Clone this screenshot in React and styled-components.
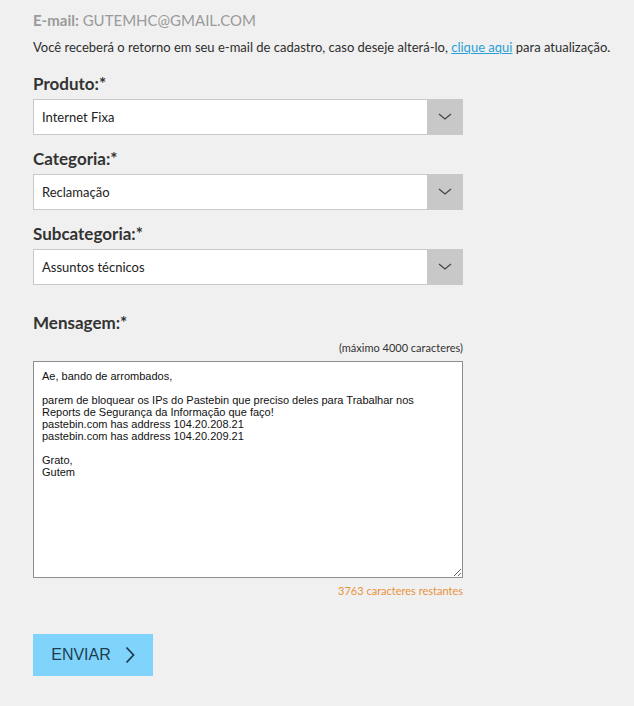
import React from 'react'
import styled, { createGlobalStyle } from 'styled-components'

const Global = createGlobalStyle`
    html, body {
        margin: 0;
        padding: 0;
        background-color: #f0f0f0;
    }
    * { box-sizing: border-box; }
`;

const message = `Ae, bando de arrombados,

parem de bloquear os IPs do Pastebin que preciso deles para Trabalhar nos
Reports de Segurança da Informação que faço!
pastebin.com has address 104.20.208.21
pastebin.com has address 104.20.209.21

Grato,
Gutem`;

function Select({ value }) {
    return (
        <SelectBox>
            <SelectValue>{value}</SelectValue>
            <Arrow>
                <svg width="14" height="8" viewBox="0 0 14 8">
                    <path d="M1 1 L7 6 L13 1" fill="none" stroke="#444" strokeWidth="1.2" />
                </svg>
            </Arrow>
        </SelectBox>
    )
}

export default function App() {
    return (
        <Page>
            <Global />
            <Email><strong>E-mail:</strong> GUTEMHC@GMAIL.COM</Email>
            <Notice>
                Você receberá o retorno em seu e-mail de cadastro, caso deseje alterá-lo, <a href="#">clique aqui</a> para atualização.
            </Notice>

            <Label $top="17px">Produto:*</Label>
            <Select value="Internet Fixa" />

            <Label>Categoria:*</Label>
            <Select value="Reclamação" />

            <Label>Subcategoria:*</Label>
            <Select value="Assuntos técnicos" />

            <Label $top="28px">Mensagem:*</Label>
            <Hint>(máximo 4000 caracteres)</Hint>
            <Message defaultValue={message} spellCheck={false} />
            <Hint $orange>3763 caracteres restantes</Hint>

            <Button>
                ENVIAR
                <svg width="10" height="18" viewBox="0 0 10 18">
                    <path d="M1.5 1.5 L8.5 9 L1.5 16.5" fill="none" stroke="#1d3d52" strokeWidth="1.8" />
                </svg>
            </Button>
        </Page>
    )
}

const Page = styled.div`
    width: 430px;
    margin-left: 33px;
    padding-top: 10px;
    padding-bottom: 30px;
    font-family: 'Lato', 'Open Sans', sans-serif;
    display: flex;
    flex-direction: column;
`;

const Email = styled.div`
    font-size: 15px;
    color: #9a9a9a;
    line-height: 20px;
    white-space: nowrap;

    strong{
        font-weight: 700;
    }
`;

const Notice = styled.div`
    margin-top: 7px;
    font-size: 13px;
    color: #2e2e2e;
    line-height: 20px;
    white-space: nowrap;

    a{
        color: #2a9fd6;
        text-decoration: underline;
    }
`;

const Label = styled.div`
    margin-top: ${props => props.$top || '14px'};
    margin-bottom: 5px;
    font-size: 17px;
    font-weight: 700;
    color: #333;
    line-height: 20px;
`;

const SelectBox = styled.div`
    height: 36px;
    display: flex;
    background-color: #fff;
    border: 1px solid #c9c9c9;
`;

const SelectValue = styled.div`
    flex: 1;
    display: flex;
    align-items: center;
    padding-left: 8px;
    font-size: 13px;
    color: #222;
`;

const Arrow = styled.div`
    width: 35px;
    display: flex;
    align-items: center;
    justify-content: center;
    background-color: #c8c8c8;
`;

const Hint = styled.div`
    text-align: right;
    font-size: 11px;
    line-height: 14px;
    color: ${props => props.$orange ? '#e8923c' : '#333'};
    margin-top: ${props => props.$orange ? '6px' : '3px'};
    margin-bottom: ${props => props.$orange ? '0' : '6px'};
`;

const Message = styled.textarea`
    display: block;
    width: 430px;
    height: 217px;
    padding: 8px 8px;
    border: 1px solid #8e8e8e;
    background-color: #fff;
    font-family: 'Liberation Sans', Arial, sans-serif;
    font-size: 11px;
    line-height: 12px;
    color: #111;
    resize: both;
    outline: none;
`;

const Button = styled.button`
    margin-top: 36px;
    width: 120px;
    height: 42px;
    border: none;
    background-color: #80d4fb;
    color: #1d3d52;
    font-family: 'Liberation Sans', Arial, sans-serif;
    font-size: 16px;
    display: flex;
    align-items: center;
    justify-content: center;
    gap: 14px;
    cursor: pointer;
`;
